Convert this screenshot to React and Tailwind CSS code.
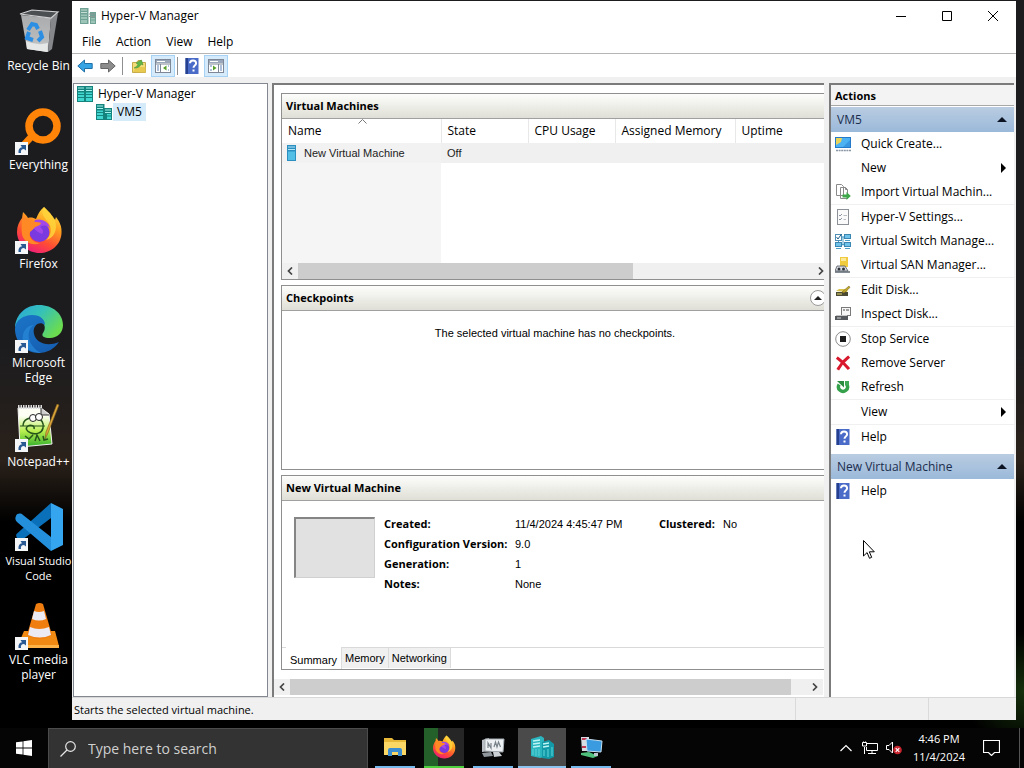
import React, { useState } from 'react';
import clsx from 'clsx';

const HelpIcon = () => (
  <svg viewBox="0 0 16 16" className="h-4 w-4 shrink-0">
    <rect x="1.500" y="0" width="13" height="16" fill="#4a6cc8" />
    <rect x="1.500" y="0" width="2.500" height="16" fill="#24408f" />
    <path d="M6 5.2C6 3.4 7.3 2.4 9 2.4s3.100 1 3.100 2.800c0 2-2.600 2.400-2.600 4.600M9.500 11.600v2" fill="none" stroke="#fff" strokeWidth="2" />
  </svg>
);

const ServerIcon = ({ dull, small }) => (
  <svg viewBox="0 0 18 17" className="h-[17px] w-[18px] shrink-0">
    <rect x="1" y="0" width="8.500" height="16" fill={dull ? '#6fa195' : '#15847f'} />
    <rect x={dull ? 11 : 9} y={small ? 4 : 0} width={dull ? 6 : 8} height={small ? 12 : 16} fill={dull ? '#6fa195' : '#15847f'} />
    <path d="M2 2h6M2 4.500h6" stroke={dull ? '#c3ddd2' : '#a5f3ee'} strokeWidth="1.200" />
    <path d="M2 6.500h6v1.500H2zM2 9h6v2H2zM2 12h6v3H2z" fill={dull ? '#9cc5b8' : '#41d6d0'} />
    <path d={small ? 'M10 6h6M10 8.500h6' : 'M10 2h6M10 4.500h6'} stroke={dull ? '#8a9a95' : '#a5f3ee'} strokeWidth="1.200" />
    <path d={small ? 'M12 10h4v1.500h-4zM12 12.500h4V15h-4z' : 'M10 6.500h6v1.500h-6zM10 9h6v2h-6zM10 12h6v3h-6z'} fill={dull ? '#9cc5b8' : '#41d6d0'} />
  </svg>
);

const ArrowIcon = ({ flip, fill, stroke }) => (
  <svg viewBox="0 0 16 16" className={clsx('h-4 w-4', flip && '-scale-x-100')}>
    <path d="M.800 8 7.500 2v3.500h7.700v5H7.500V14z" fill={fill} stroke={stroke} />
  </svg>
);

const FolderUpIcon = () => (
  <svg viewBox="0 0 16 16" className="h-4 w-4">
    <path d="M1.500 4.500h4L7 2.500h3l1 2h3.500v10h-13z" fill="#f3dd78" stroke="#c4a84a" />
    <path d="M2 14l3-5h9.500v5.500z" fill="#e8c94f" />
    <path d="M3 10c1.500-.5 3-2 4-3.500L5 5l5.500-3 1.500 5-1.800-.8C9 8.500 6.500 10.500 3 10z" fill="#5fb548" stroke="#3f8d33" strokeWidth=".5" />
  </svg>
);

const PaneIcon = ({ right }) => (
  <svg viewBox="0 0 16 16" className="h-4 w-4">
    <rect x=".5" y="1.500" width="15" height="13" fill="#fff" stroke="#7d8795" />
    <rect x="1" y="2" width="14" height="3" fill="#9aa7ba" />
    <path d="M2 3.500h8" stroke="#fff" />
    <path d="M1 6h14" stroke="#7d8795" />
    <path d={right ? 'M10.500 6v8' : 'M5.500 6v8'} stroke="#7d8795" />
    <path d={right ? 'M12 8h2M12 10h2M12 12h2M2 8h2M2 12h2' : 'M2 8h2M2 10h2M2 12h2M13 8h1M13 12h1'} stroke="#5d80b5" />
    <path d={right ? 'M5 7.500v5L8.500 10z' : 'M11.500 7.500v5L8 10z'} fill="#57a02c" />
  </svg>
);

const actionIcons = {
  create: (
    <>
      <rect x="0" y="1" width="16" height="11" fill="#2479c9" />
      <rect x="1" y="2" width="14" height="9" fill="#4db2f2" />
      <path d="M1 2h6l-1 4-5 3z" fill="#e9d45a" />
      <path d="M8 11l7-7v7z" fill="#3797e0" />
      <path d="M1 14.500h15" stroke="#8a97a5" strokeWidth="1.500" strokeDasharray="2 .6" />
    </>
  ),
  import: (
    <>
      <path d="M1.500.5h5l2 2v9h-7zM5.500 3.500h5l2 2v9h-7z" fill="#fff" stroke="#8a8a8a" />
      <path d="M10.500 3.500v2h2" fill="none" stroke="#8a8a8a" />
      <path d="M7.500 10.500h4V8l4.300 4-4.300 4v-2.500h-4z" fill="#3ea84a" />
    </>
  ),
  settings: (
    <>
      <rect x="2.500" y=".5" width="11" height="15" fill="#fafafa" stroke="#8c9097" />
      <path d="M4 6l1 1 2-2M4 10l1 1 2-2" fill="none" stroke="#8c96a3" />
      <path d="M8.500 6.500H12M8.500 10.500H11" stroke="#b8bdc4" />
    </>
  ),
  network: (
    <>
      <path d="M8 3.500v9M3.500 8v4M6 4h4M7 11.500h3" stroke="#4d9fc6" />
      <rect x=".5" y="1.500" width="6" height="6" fill="#fff" stroke="#4d8fb5" />
      <path d="M1.500 4l1.500 2 3.500-5" fill="none" stroke="#1f5f8c" />
      <rect x="9.500" y="1.500" width="6" height="4" fill="#6fc3ea" stroke="#3b86b0" />
      <rect x=".5" y="9.500" width="6" height="4" fill="#6fc3ea" stroke="#3b86b0" />
      <rect x="9.500" y="9.500" width="6" height="4" fill="#6fc3ea" stroke="#3b86b0" />
      <path d="M1 15.500h5M10 15.500h5M10 7.500h5" stroke="#4d9fc6" />
    </>
  ),
  san: (
    <>
      <rect x="5" y="0" width="8" height="10" fill="#f0cb3e" />
      <path d="M6 1h5v3H6z" fill="#fbe99a" />
      <path d="M0 14l2-5h8l3 5z" fill="#d9dde2" stroke="#4e545c" strokeWidth=".8" />
      <circle cx="4" cy="12" r="1.500" fill="#2d333b" />
      <circle cx="8.500" cy="12" r="1.500" fill="#2d333b" />
      <path d="M0 15h15" stroke="#5a6672" strokeWidth="1.500" />
    </>
  ),
  edit: (
    <>
      <path d="M1 9l3-2h9l-1 3z" fill="#d8c250" />
      <path d="M1 10h12v4H1z" fill="#4b4a35" />
      <path d="M2 12h5" stroke="#e8d770" />
      <path d="M7 10l7-6 1 1.500L9 11z" fill="#c4a92c" stroke="#6c5a12" strokeWidth=".5" />
    </>
  ),
  inspect: (
    <>
      <rect x="6.500" y="1.500" width="9" height="8" fill="#f7f7f7" stroke="#7a7a7a" />
      <path d="M8 4h2M11 4h3" stroke="#4a4a4a" />
      <path d="M1 9h11v1H1z" fill="#c5c5c5" />
      <path d="M0 10h13v4H0z" fill="#55585c" />
      <path d="M2 12h4" stroke="#d5d5d5" />
    </>
  ),
  stop: (
    <>
      <circle cx="8" cy="8" r="7.300" fill="#fff" stroke="#8c8c8c" />
      <rect x="5" y="5" width="6" height="6" fill="#1c1c1c" />
    </>
  ),
  remove: <path d="M3 3.500Q8 7 13 13M13 2.500Q7 7 3.500 13.500" fill="none" stroke="#d8182c" strokeWidth="3" strokeLinecap="square" />,
  refresh: (
    <>
      <path d="M4.200 5.500A4.500 4.500 0 1 0 11.800 5.500" fill="none" stroke="#35a04a" strokeWidth="3.400" />
      <path d="M2 2h7v6.500z" fill="#2b8c3f" />
      <path d="M10 2h4v4.500h-4z" fill="#3fa955" />
    </>
  ),
};

const ActionIcon = ({ name }) => {
  if (name === 'help') return <HelpIcon />;
  return <svg viewBox="0 0 16 16" className="h-4 w-4 shrink-0" fill="none">{actionIcons[name]}</svg>;
};

const FirefoxIcon = ({ className }) => (
  <svg viewBox="0 0 48 48" className={className}>
    <defs>
      <linearGradient id="ffBody" x1="0.8" y1="0" x2="0.3" y2="1">
        <stop offset="0" stopColor="#ffe84a" />
        <stop offset=".35" stopColor="#ffa01f" />
        <stop offset=".7" stopColor="#ff4b35" />
        <stop offset="1" stopColor="#ee1c7c" />
      </linearGradient>
    </defs>
    <path d="M29 1c3 3 6 5 8 9 1 2 2 3 3 4l1-3c4 5 6 10 5.500 16C46 39 36 47 24.500 47S2 38 2 26c0-6 2-10 5-14l1-6c2 2 4 4 5 6 3-1 6 0 8 1 2-5 4-9 8-12z" fill="url(#ffBody)" />
    <circle cx="24.500" cy="26" r="10" fill="#7a3ae0" />
    <path d="M20 14c7-2 14 2 15 8-3-3-7-3-10-1 3 2 4 5 2 7-4-2-8-4-9-8z" fill="#a348e8" />
    <path d="M7 13c5-2 9 0 12 3 3 0 6 0 7 1-1 3-4 3-6 4-1 2-3 3-5 5-2 6 4 11 10 11-8 4-17-2-18-9-1-6 0-11 0-15z" fill="#ff8a25" />
    <path d="M29 1c-4 7 1 11 4 15 4 5 4 13-2 18 8-2 12-10 9-20-2-5-8-8-11-13z" fill="#ffd43b" opacity=".85" />
  </svg>
);

const desktopArt = {
  bin: (
    <>
      <defs>
        <linearGradient id="binFront" x1="0" y1="0" x2="0" y2="1">
          <stop offset="0" stopColor="#a9abad" />
          <stop offset=".7" stopColor="#b9bbbc" />
          <stop offset="1" stopColor="#dcdddd" />
        </linearGradient>
      </defs>
      <path d="M6 7l30 3-3 34-21-3z" fill="url(#binFront)" />
      <path d="M36 10l7-5-6 36-4 3z" fill="#85878a" />
      <path d="M5 6l12-4 26 2-7 6z" fill="#4c4f52" stroke="#cfd0d1" strokeWidth="1.200" />
      <path d="M11 33q11 5 22 2l-1 9-20-3z" fill="#e6e7e7" />
      <path d="M13 22l4-6 4 1 2 4M25 23l2 6-4 4M18 32l-6-2 2-6" fill="none" stroke="#2d8fe3" strokeWidth="4" />
    </>
  ),
  everything: (
    <>
      <circle cx="28" cy="19" r="14" fill="none" stroke="#ff8408" strokeWidth="7.500" />
      <path d="M17 29L5 42" stroke="#ff8408" strokeWidth="7" />
    </>
  ),
  edge: (
    <>
      <defs>
        <linearGradient id="edgeTop" x1="0" y1="0" x2="1" y2=".6">
          <stop offset="0" stopColor="#2aa5dd" />
          <stop offset=".5" stopColor="#35c1b8" />
          <stop offset="1" stopColor="#6bdc4f" />
        </linearGradient>
        <linearGradient id="edgeLow" x1="0" y1="0" x2=".6" y2="1">
          <stop offset="0" stopColor="#1b75c7" />
          <stop offset="1" stopColor="#1660b4" />
        </linearGradient>
      </defs>
      <path d="M0 22C1 9 11 0 24 0c14 0 24 9 24 20 0 8-6 13-13 13-6 0-9-2-7-5 5-7-1-13-8-13-9 0-16 3-20 7z" fill="url(#edgeTop)" />
      <path d="M0 24c0-9 9-14 17-14 9 0 13 5 13 10-6-5-13 1-11 9 2 9 13 13 25 8-5 7-12 11-20 11C10 48 0 37 0 24z" fill="url(#edgeLow)" />
      <path d="M19 20c-8 4-8 20 7 28C12 48 6 38 8 30c1-6 6-10 11-10z" fill="#2c8fe0" opacity=".6" />
    </>
  ),
  notepad: (
    <>
      <defs>
        <linearGradient id="nppGreen" x1="0" y1="0" x2="0" y2="1">
          <stop offset=".2" stopColor="#fdfff5" />
          <stop offset=".6" stopColor="#b6ee4d" />
          <stop offset="1" stopColor="#2fae2b" />
        </linearGradient>
      </defs>
      <path d="M3 4l23 0 8 6 3 30-32 3z" fill="url(#nppGreen)" stroke="#f2f2f2" />
      <path d="M3 3h24" stroke="#ddd" strokeWidth="4" strokeDasharray="1.500 1" />
      <path d="M26 4v7h8" fill="#ccc" stroke="#333" />
      <path d="M8 22c0-7 7-9 13-8s8 5 7 10-7 7-12 5-6-5-3-7 7 0 6 3M10 32l4 3 4-4M20 37l2-6 3 6M28 32l1 4 4-1" fill="none" stroke="#26551c" strokeWidth="1.500" />
      <circle cx="18" cy="14" r="3.500" fill="#fff" stroke="#222" />
      <circle cx="24" cy="13" r="3.500" fill="#fff" stroke="#222" />
      <path d="M5 22h25" stroke="#26551c" />
      <path d="M44 1L33 29l-3 6 1-7L42 0z" fill="#dba63a" stroke="#7c5a20" strokeWidth=".6" />
    </>
  ),
  vscode: (
    <>
      <path d="M36 0v15L7 37c-3 1-7-3-5.500-6z" fill="#0b70ba" />
      <path d="M1 13c1-3 5-3 7-1l28 22v14L2 19c-2-2-2-4-1-6z" fill="#2490dc" />
      <path d="M36 0l12 6v36l-12 6z" fill="#35a5f0" />
    </>
  ),
  vlc: (
    <>
      <path d="M9 29l31 0 4 15-1 2H8l-5-3z" fill="#f08a12" />
      <path d="M6 43h38v3H8z" fill="#ffb347" />
      <path d="M21 2q3.500-2 7 0l9 31q-12 8-25 0z" fill="#ef7d10" />
      <path d="M19 9q5 2 10 0l2 8q-7 3-14 0zM15 25q9 4 19 0l2 8q-11 5-23 0z" fill="#eceaf2" />
    </>
  ),
};

const desktopItems = [
  { id: 'bin', label: 'Recycle Bin' },
  { id: 'everything', label: 'Everything', link: true },
  { id: 'firefox', label: 'Firefox', link: true },
  { id: 'edge', label: 'Microsoft Edge', link: true },
  { id: 'notepad', label: 'Notepad++', link: true },
  { id: 'vscode', label: 'Visual Studio Code', link: true },
  { id: 'vlc', label: 'VLC media player', link: true },
];

const DesktopIcon = ({ item }) => (
  <button className="flex h-[99px] w-[77px] shrink-0 flex-col items-center gap-0.5 text-xs leading-[15px] text-white">
    <span className="relative block h-12 w-12">
      {item.id === 'firefox'
        ? <FirefoxIcon className="h-12 w-12" />
        : <svg viewBox="0 0 48 48" className="h-12 w-12">{desktopArt[item.id]}</svg>}
      {item.link && (
        <svg viewBox="0 0 13 13" className="absolute bottom-0 left-0 h-[13px] w-[13px]">
          <rect width="13" height="13" fill="#f4f6f8" />
          <path d="M3.500 11C3 7.500 4.500 5.500 7 5.200L5.500 3H11v5.500L9 7c-2.500 0-3.500 1.500-3 4z" fill="#2a5a94" />
        </svg>
      )}
    </span>
    <span className={clsx('text-center', item.id === 'vscode' ? 'w-[72px] text-[11px]' : 'w-[70px]')}>{item.label}</span>
  </button>
);

const Chevron = ({ dir }) => (
  <svg viewBox="0 0 8 8" className="h-2 w-2">
    <path d={dir === 'left' ? 'M6 .5L2.500 4 6 7.500' : 'M2 .5L5.500 4 2 7.500'} fill="none" stroke="#444" strokeWidth="1.700" />
  </svg>
);

const ScrollBar = ({ thumb, className }) => (
  <div className={clsx('flex h-4 shrink-0 bg-[#f0f0f0]', className)}>
    <button aria-label="Scroll left" className="flex w-4 shrink-0 items-center justify-center"><Chevron dir="left" /></button>
    <div className="flex-1"><div className={clsx('h-full bg-[#cdcdcd]', thumb)} /></div>
    <button aria-label="Scroll right" className="flex w-4 shrink-0 items-center justify-center"><Chevron dir="right" /></button>
  </div>
);

const Group = ({ title, action, className, children }) => (
  <section className={clsx('flex min-h-0 flex-col overflow-hidden border border-r-0 border-[#8f8f8f] bg-white', className)}>
    <header className="flex h-[25px] shrink-0 items-center justify-between border-b border-[#a0a0a0] bg-linear-to-b from-[#fdfdfc] to-[#dfdfd6] pl-1">
      <h2 className="text-[11px] font-bold">{title}</h2>
      {action}
    </header>
    {children}
  </section>
);

const columns = [
  { label: 'Name', width: 'w-[159px]' },
  { label: 'State', width: 'w-[87px]' },
  { label: 'CPU Usage', width: 'w-[87px]' },
  { label: 'Assigned Memory', width: 'w-[120px]' },
  { label: 'Uptime', width: 'w-auto' },
];

const VirtualMachines = () => (
  <Group title="Virtual Machines" className="flex-[187_1_0px]">
    <div className="flex min-h-0 flex-1 flex-col">
      <table className="w-full flex-1 table-fixed border-collapse text-left">
        <thead>
          <tr className="h-6 text-xs">
            {columns.map((c, i) => (
              <th key={c.label} className={clsx('relative border-r border-[#e8e8e8] py-0 pl-1.5 font-normal last:border-r-0', c.width)}>
                {c.label}
                {i === 0 && (
                  <svg viewBox="0 0 9 5" className="absolute top-0 left-[76px] h-[5px] w-[9px]">
                    <path d="M.5 4.500l4-4 4 4" fill="none" stroke="#777" />
                  </svg>
                )}
              </th>
            ))}
          </tr>
        </thead>
        <tbody>
          <tr className="h-5 bg-[#f0f0f0] font-[Liberation_Sans,Arial,sans-serif] text-[11px] text-[#222]">
            <td className="bg-[#f2f2f2] p-0 pl-1">
              <span className="flex items-center gap-[7px]">
                <svg viewBox="0 0 11 16" className="h-4 w-[11px]">
                  <rect x="1" width="9" height="16" fill="#2b8fc0" />
                  <path d="M2 2h7M2 4.500h7" stroke="#b4e6fa" />
                  <rect x="2" y="6.500" width="7" height="8.500" fill="#54bfe6" />
                </svg>
                New Virtual Machine
              </span>
            </td>
            <td className="p-0 pl-1.5">Off</td>
            <td /><td /><td />
          </tr>
          <tr>
            <td className="bg-[#f5f5f5]" />
            <td colSpan={4} />
          </tr>
        </tbody>
      </table>
    </div>
    <ScrollBar thumb="w-[65%]" className="-mr-[5px]" />
  </Group>
);

const Checkpoints = () => (
  <Group
    title="Checkpoints"
    className="flex-[185_1_0px]"
    action={
      <button aria-label="Collapse" className="-mr-0.5 flex h-4 w-4 items-center justify-center rounded-full border border-[#999] bg-white">
        <svg viewBox="0 0 8 4" className="h-1 w-2"><path d="M0 4l4-4 4 4z" fill="#222" /></svg>
      </button>
    }
  >
    <p className="pt-[14px] pl-1 text-center font-[Liberation_Sans,Arial,sans-serif] text-[11px] leading-4">The selected virtual machine has no checkpoints.</p>
  </Group>
);

const details = [
  ['Created:', '11/4/2024 4:45:47 PM'],
  ['Configuration Version:', '9.0'],
  ['Generation:', '1'],
  ['Notes:', 'None'],
];

const Details = () => {
  const [tab, setTab] = useState('Summary');
  return (
    <Group title="New Virtual Machine" className="flex-[195_1_0px]">
      <div className="flex flex-1 gap-[9px] pt-[13px] pl-3">
        <div className="mt-[3px] h-[61px] w-[81px] shrink-0 border-t-2 border-l-2 border-[#858585] border-r border-b border-r-[#d0d0d0] border-b-[#d0d0d0] bg-[#e1e1e1]" />
        <dl className="grid w-[275px] shrink-0 auto-rows-[20px] grid-cols-[131px_1fr] items-center text-[11px]">
          {details.map(([k, v]) => (
            <React.Fragment key={k}>
              <dt className="font-bold whitespace-nowrap">{k}</dt>
              <dd className="font-[Liberation_Sans,Arial,sans-serif]">{v}</dd>
            </React.Fragment>
          ))}
        </dl>
        <dl className="-ml-[9px] grid auto-rows-[20px] grid-cols-[64px_1fr] items-center text-[11px]">
          <dt className="font-bold">Clustered:</dt>
          <dd className="font-[Liberation_Sans,Arial,sans-serif]">No</dd>
        </dl>
      </div>
      <div role="tablist" className="flex h-[22px] shrink-0 items-start border-t border-[#d9d9d9] pl-1 font-[Liberation_Sans,Arial,sans-serif] text-[11px]">
        {['Summary', 'Memory', 'Networking'].map(t => (
          <button
            key={t}
            role="tab"
            aria-selected={tab === t}
            onClick={() => setTab(t)}
            className={clsx('border-r border-[#dcdcdc]', tab === t ? '-mt-px h-[22px] bg-white px-1 pt-1' : 'h-5 bg-[#f0f0f0] px-[3px]')}
          >
            {t}
          </button>
        ))}
      </div>
    </Group>
  );
};

const actionGroups = [
  {
    title: 'VM5',
    sections: [
      [
        { icon: 'create', label: 'Quick Create...' },
        { label: 'New', submenu: true },
        { icon: 'import', label: 'Import Virtual Machin...' },
      ],
      [
        { icon: 'settings', label: 'Hyper-V Settings...' },
        { icon: 'network', label: 'Virtual Switch Manage...' },
        { icon: 'san', label: 'Virtual SAN Manager...' },
      ],
      [
        { icon: 'edit', label: 'Edit Disk...' },
        { icon: 'inspect', label: 'Inspect Disk...' },
      ],
      [
        { icon: 'stop', label: 'Stop Service' },
        { icon: 'remove', label: 'Remove Server' },
        { icon: 'refresh', label: 'Refresh' },
      ],
      [{ label: 'View', submenu: true }],
      [{ icon: 'help', label: 'Help' }],
    ],
  },
  { title: 'New Virtual Machine', sections: [[{ icon: 'help', label: 'Help' }]] },
];

const ActionsPane = () => (
  <aside className="mr-0.5 w-[185px] shrink-0 overflow-hidden border-t-2 border-l-2 border-[#7b7b7b] bg-white">
    <h2 className="h-[21px] border-b border-[#a8a8a8] bg-[#f3f3f3] pl-1 text-[11px] leading-[21px] font-bold">Actions</h2>
    <div className="flex flex-col gap-[5px] pt-px">
      {actionGroups.map(g => (
        <section key={g.title}>
          <button className="flex h-[25px] w-full items-center justify-between bg-linear-to-b from-[#b9cce1] to-[#9bb9da] pr-[7px] pl-1.5 text-xs text-[#1b2d4d]">
            {g.title}
            <svg viewBox="0 0 10 5" className="h-[5px] w-2.5"><path d="M0 5l5-5 5 5z" fill="#0c1322" /></svg>
          </button>
          {g.sections.map((items, i) => (
            <ul key={i} className={clsx(i > 0 && 'border-t border-[#f0f0f0]')}>
              {items.map(a => (
                <li key={a.label}>
                  <button className="flex h-6 w-full items-center gap-2.5 pr-2 pl-1 text-left text-xs hover:bg-[#e5f3ff]">
                    {a.icon ? <ActionIcon name={a.icon} /> : <span className="w-4" />}
                    <span className="flex-1 whitespace-nowrap">{a.label}</span>
                    {a.submenu && <svg viewBox="0 0 5 10" className="h-2.5 w-[5px]"><path d="M0 0l5 5-5 5z" fill="#000" /></svg>}
                  </button>
                </li>
              ))}
            </ul>
          ))}
        </section>
      ))}
    </div>
  </aside>
);

const TitleBar = () => (
  <header className="flex h-[30px] shrink-0 items-center pl-[7px] text-xs">
    <ServerIcon dull small />
    <h1 className="flex-1 pl-1">Hyper-V Manager</h1>
    {[
      ['Minimize', 'M0 5.500h10'],
      ['Maximize', 'M.5.5h9v9h-9z'],
      ['Close', 'M0 0l10 10M10 0L0 10'],
    ].map(([label, d]) => (
      <button key={label} aria-label={label} className="flex h-full w-[46px] items-center justify-center">
        <svg viewBox="0 0 10 10" className="h-2.5 w-2.5"><path d={d} fill="none" stroke="#000" /></svg>
      </button>
    ))}
  </header>
);

const ToolBar = () => (
  <div className="flex h-[23px] shrink-0 items-center pl-[5px]">
    <button aria-label="Back"><ArrowIcon fill="#35a4e4" stroke="#2070a8" /></button>
    <button aria-label="Forward" className="ml-[7px]"><ArrowIcon flip fill="#8c8c8c" stroke="#666" /></button>
    <span className="ml-1.5 h-[18px] w-px bg-[#8f8f8f]" />
    <button aria-label="Up" className="ml-2"><FolderUpIcon /></button>
    <button aria-label="Show console tree" className="ml-1 border border-[#a6d2f5] bg-[#d5eafb] px-[3px] py-0.5"><PaneIcon /></button>
    <span className="ml-0.5 h-[18px] w-px bg-[#8f8f8f]" />
    <button aria-label="Help" className="ml-1.5"><HelpIcon /></button>
    <button aria-label="Show action pane" className="ml-1 border border-[#a6d2f5] bg-[#d5eafb] px-[3px] py-0.5"><PaneIcon right /></button>
  </div>
);

const ManagerWindow = () => (
  <main className="mt-px mr-2 mb-2 flex min-w-0 flex-1 flex-col bg-white text-black">
    <TitleBar />
    <nav className="flex h-[23px] shrink-0 items-center border-b border-[#b5b5b5] pl-0.5 text-xs">
      {['File', 'Action', 'View', 'Help'].map(m => <button key={m} className="pr-[7px] pl-2">{m}</button>)}
    </nav>
    <ToolBar />
    <div className="flex min-h-0 flex-1 bg-[#f0f0f0] pt-1.5 pl-px">
      <nav className="mr-1 w-[195px] shrink-0 border border-[#828790] bg-white pt-px pl-0.5 text-xs">
        <div className="flex h-[18px] items-center gap-1"><ServerIcon />Hyper-V Manager</div>
        <div className="flex h-[18px] items-center pl-[19px]">
          <ServerIcon small />
          <button className="h-[18px] bg-[#d5ebfa] px-1">VM5</button>
        </div>
      </nav>
      <div className="mr-[5px] flex min-w-0 flex-1 flex-col overflow-hidden border-t-2 border-l-2 border-[#7b7b7b] bg-white pb-0.5">
        <div className="flex min-h-0 flex-1 flex-col gap-[5px] pt-2 pb-[9px] pl-[7px]">
          <VirtualMachines />
          <Checkpoints />
          <Details />
        </div>
        <ScrollBar thumb="w-[97%]" className="mr-px" />
      </div>
      <ActionsPane />
    </div>
    <footer className="flex h-[23px] shrink-0 items-center border-t border-[#d8d8d8] bg-[#f0f0f0] pl-0.5 text-[11px]">
      <span className="flex-1 pt-0.5">Starts the selected virtual machine.</span>
      <span className="h-full w-[133px] border-l border-[#dadada]" />
      <span className="h-full w-[88px] border-l border-[#dadada]" />
    </footer>
  </main>
);

const taskIcons = {
  explorer: (
    <>
      <path d="M1 3h8l2 2h12v15H1z" fill="#e8b839" />
      <path d="M1 7h22v13H1z" fill="#fbd866" />
      <path d="M5 21v-6q0-2 2-2h10q2 0 2 2v6h-4v-4H9v4z" fill="#3d8ed1" />
    </>
  ),
  monitor: (
    <>
      <path d="M1 5l7-2v13l-7 1z" fill="#b9bfc4" />
      <path d="M1 18l9-1 2 4-9 1z" fill="#8f979d" />
      <path d="M4 4l19 0-1 13-18-1z" fill="#eef1f3" stroke="#a5adb3" />
      <path d="M7 13V8l3 5V8M13 12l1.500-5 1.500 5 1.500-5 2 5" fill="none" stroke="#78828a" strokeWidth="1.200" />
      <path d="M12 17h6l3 4-8 1z" fill="#cbd1d5" />
    </>
  ),
  hyperv: (
    <>
      <path d="M1 4l10-3 3 2v19l-4 1-9-2z" fill="#2bb5bf" />
      <path d="M12 7l7-2 5 4v13l-5 2-7-1z" fill="#139aa8" />
      <path d="M3 6l7-1M3 9l7-1M3 12l7-1M13 9l6-1M13 12l6-1" stroke="#bdf5f4" strokeWidth="1.500" />
      <path d="M3 14v6M6 14v7M9 14v7M14 15v6M18 14v8M22 12v9" stroke="#55ced2" strokeWidth="1.200" />
    </>
  ),
  remote: (
    <>
      <path d="M2 2h8v14H3z" fill="#d7dde3" />
      <path d="M3 4h5M3 12h4" stroke="#c03a55" strokeWidth="2" />
      <path d="M7 4l16 2-1 11-14-1z" fill="#3a9be0" stroke="#c5dff0" />
      <path d="M2 18l8-1 9 4-5 2-12-3z" fill="#4fc07b" />
      <path d="M15 18h4v3h-4z" fill="#b9c4cc" />
    </>
  ),
};

const tasks = [
  { id: 'explorer', label: 'File Explorer', bar: 'bg-[#76b9ed]' },
  { id: 'firefox', label: 'Firefox', bar: 'bg-[#4fd03f]' },
  { id: 'monitor', label: 'System Monitor', bar: 'bg-[#76b9ed]' },
  { id: 'hyperv', label: 'Hyper-V Manager', bar: 'bg-[#8cc4f0]' },
  { id: 'remote', label: 'Remote Desktop', bar: 'bg-[#76b9ed]' },
];

const TaskButton = ({ task }) => {
  const active = task.id === 'hyperv';
  const wide = active ? 'w-12' : 'w-10';
  return (
    <button aria-label={task.label} className={clsx('flex h-10 w-12 flex-col items-center', active && 'bg-[#4a4a4a]')}>
      <span className={clsx('flex flex-1 items-center justify-center', wide, task.id === 'firefox' && 'bg-linear-to-r from-[#24602a] from-35% to-[#262626] to-35%')}>
        {task.id === 'firefox'
          ? <FirefoxIcon className="h-6 w-6" />
          : <svg viewBox="0 0 24 24" className="h-6 w-6">{taskIcons[task.id]}</svg>}
      </span>
      <span className={clsx('h-0.5', wide, task.bar)} />
    </button>
  );
};

const TaskBar = () => (
  <footer className="flex h-10 shrink-0 items-stretch bg-[#050505] text-white">
    <button aria-label="Start" className="flex w-12 items-center justify-center">
      <svg viewBox="0 0 16 16" className="h-4 w-4">
        <path d="M0 2.300L6.600 1.400v6.200H0zM7.400 1.300L16 0v7.600H7.400zM0 8.400h6.600v6.200L0 13.700zM7.400 8.400H16V16l-8.600-1.200z" fill="#fff" />
      </svg>
    </button>
    <label className="flex w-80 shrink-0 items-center gap-3 border border-b-0 border-[#4c4c4c] bg-[#333] pl-[11px]">
      <svg viewBox="0 0 16 16" className="h-4 w-4 shrink-0" fill="none" stroke="#e6e6e6" strokeWidth="1.200">
        <circle cx="10.500" cy="5.500" r="4.800" />
        <path d="M7 9L.5 15.500" />
      </svg>
      <input type="text" aria-label="Search" placeholder="Type here to search" className="min-w-0 flex-1 bg-transparent text-sm outline-none placeholder:text-[#d0d0d0]" />
    </label>
    <div className="flex flex-1 gap-px pl-[3px]">
      {tasks.map(t => <TaskButton key={t.id} task={t} />)}
    </div>
    <div className="flex items-center">
      <button aria-label="Show hidden icons" className="flex w-6 justify-center">
        <svg viewBox="0 0 12 8" className="h-2 w-3"><path d="M.5 7L6 1.500 11.500 7" fill="none" stroke="#fff" strokeWidth="1.200" /></svg>
      </button>
      <button aria-label="Network" className="flex w-6 justify-center">
        <svg viewBox="0 0 16 14" className="h-[14px] w-4" fill="none" stroke="#fff">
          <path d="M5 2.500h10.500v7H4.500V6M10 9.500v3M6 12.500h8M2.500 6v7" />
          <path d="M.5 1.500h4V5h-4zM1.500.5v1M3.500.5v1" />
        </svg>
      </button>
      <button aria-label="Volume muted" className="flex w-6 justify-center">
        <svg viewBox="0 0 16 14" className="h-[14px] w-4">
          <path d="M.5 4.500H3L6.500 1v11L3 8.500H.5z" fill="none" stroke="#fff" />
          <circle cx="11.500" cy="9" r="4.300" fill="#c9252f" />
          <path d="M9.700 7.200l3.600 3.600M13.300 7.200l-3.600 3.600" stroke="#fff" strokeWidth="1.200" />
        </svg>
      </button>
      <time dateTime="2024-11-04T16:46" className="w-[66px] text-center text-[11px] leading-[18px]">4:46 PM<br />11/4/2024</time>
      <button aria-label="Notifications" className="flex w-[38px] justify-center">
        <svg viewBox="0 0 17 16" className="h-4 w-[17px]">
          <path d="M.5.5h16v12h-5L8.500 15.500 5.500 12.500h-5z" fill="none" stroke="#fff" strokeWidth="1.200" />
        </svg>
      </button>
      <span className="mr-1 ml-[9px] h-10 w-px bg-[#555]" />
    </div>
  </footer>
);

export default function App() {
  return (
    <div className="relative flex h-screen flex-col overflow-hidden bg-[radial-gradient(circle_at_100%_90%,#16300c,transparent_60px),linear-gradient(#1c1c1f_45%,#2a211a_60%,#000_68%)] font-[Open_Sans,Noto_Sans,sans-serif]">
      <div className="flex min-h-0 flex-1">
        <nav className="flex w-[72px] shrink-0 flex-col overflow-hidden pt-2">
          {desktopItems.map(i => <DesktopIcon key={i.id} item={i} />)}
        </nav>
        <ManagerWindow />
      </div>
      <TaskBar />
      <svg viewBox="0 0 12 19" className="pointer-events-none absolute top-[540px] left-[863px] h-[19px] w-3">
        <path d="M.5.5v15.500l3.600-3.400 2.400 5.700 2.200-1-2.400-5.500h5z" fill="#fff" stroke="#000" />
      </svg>
    </div>
  );
}
